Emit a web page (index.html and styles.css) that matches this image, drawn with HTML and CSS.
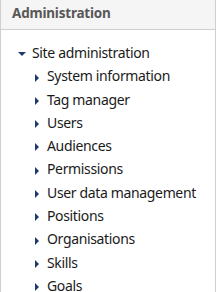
FILE: index.html
```html
<!DOCTYPE html>
<html>
<head>
    <title>Administration</title>
    <link rel="stylesheet" href="styles.css">
</head>
<body>
    <div class="block">
        <div class="block-header">Administration</div>
        <div class="block-content">
            <ul class="tree">
                <li class="branch open">
                    <span class="toggle down"></span><span class="label">Site administration</span>
                    <ul class="tree sub">
                        <li class="branch"><span class="toggle right"></span><span class="label">System information</span></li>
                        <li class="branch"><span class="toggle right"></span><span class="label">Tag manager</span></li>
                        <li class="branch"><span class="toggle right"></span><span class="label">Users</span></li>
                        <li class="branch"><span class="toggle right"></span><span class="label">Audiences</span></li>
                        <li class="branch"><span class="toggle right"></span><span class="label">Permissions</span></li>
                        <li class="branch"><span class="toggle right"></span><span class="label">User data management</span></li>
                        <li class="branch"><span class="toggle right"></span><span class="label">Positions</span></li>
                        <li class="branch"><span class="toggle right"></span><span class="label">Organisations</span></li>
                        <li class="branch"><span class="toggle right"></span><span class="label">Skills</span></li>
                        <li class="branch"><span class="toggle right"></span><span class="label">Goals</span></li>
                    </ul>
                </li>
            </ul>
        </div>
    </div>
</body>
</html>
```

FILE: styles.css
```css
body {
    margin: 0;
    padding: 0;
    background-color: #fff;
    font-family: "Noto Sans", "Open Sans", sans-serif;
    color: #1a1a1a;
}

.block {
    width: 214px;
    border-left: 1px solid #cfcfcf;
    border-right: 1px solid #cfcfcf;
    min-height: 292px;
}

.block-header {
    background-color: #f5f5f5;
    border-bottom: 1px solid #cfcfcf;
    height: 30px;
    box-sizing: border-box;
    padding: 4px 0 0 11px;
    font-size: 13.5px;
    letter-spacing: -0.2px;
    font-weight: bold;
    color: #585858;
}

.block-content {
    padding: 11px 0 0 0;
}

.tree {
    list-style: none;
    margin: 0;
    padding: 0 0 0 17px;
}

.tree.sub {
    padding: 0;
    margin-left: 17px;
}

.tree li {
    font-size: 14px;
    letter-spacing: -0.35px;
    line-height: 23.3px;
    white-space: nowrap;
}

.toggle {
    display: inline-block;
    width: 0;
    height: 0;
    vertical-align: middle;
}

.toggle.down {
    border-left: 4px solid transparent;
    border-right: 4px solid transparent;
    border-top: 4px solid #1c3a6c;
    margin-right: 6px;
}

.toggle.right {
    border-top: 4px solid transparent;
    border-bottom: 4px solid transparent;
    border-left: 4px solid #1c3a6c;
    margin-right: 8px;
}
```
